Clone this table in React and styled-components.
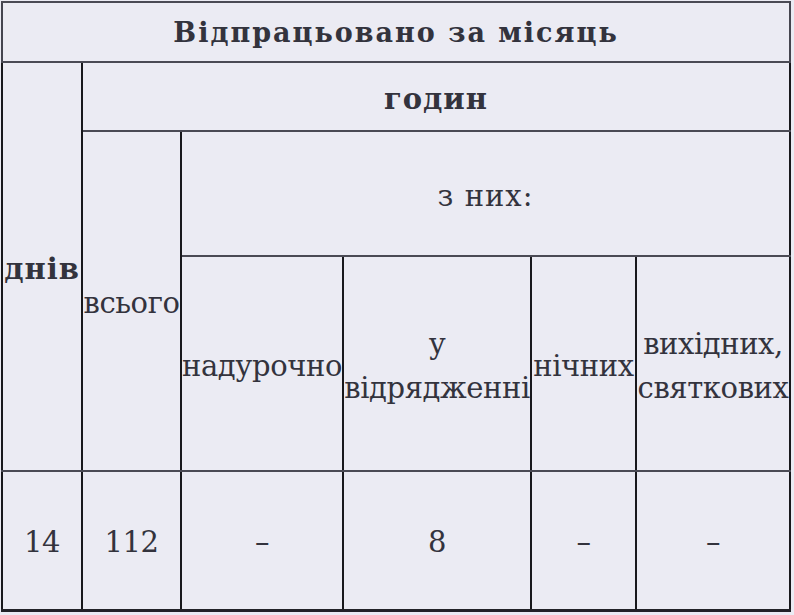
import React from 'react';
import styled, {createGlobalStyle} from 'styled-components';

const GlobalStyle = createGlobalStyle`
  html, body {
    margin: 0;
    padding: 0;
    background: #ebebf3;
  }
  body {
    font-family: "DejaVu Serif", "Liberation Serif", serif;
    color: #33333d;
  }
`;

const Page = styled.div`
  padding: 1px 0 0 1px;
  width: 794px;
  overflow: hidden;
`;

const Table = styled.table`
  border-collapse: collapse;
  table-layout: fixed;
  width: 790px;
  border-top: 2px solid #45454f;
  border-bottom: 3px solid #222228;
`;

const Row = styled.tr`
  height: ${props => props.h}px;
`;

const Cell = styled.td`
  padding: 4px 0 0;
  text-align: center;
  vertical-align: middle;
  font-size: 29px;
  line-height: 44px;
  font-weight: ${props => (props.bold ? 700 : 400)};
  letter-spacing: ${props => (props.spaced ? '1px' : '-0.4px')};
  border-left: 2px solid #18181c;
  border-right: 2px solid #18181c;
  border-top: 2px solid #4a4a54;
  border-bottom: 2px solid #4a4a54;
  white-space: nowrap;
  overflow: hidden;
`;

const Title = styled(Cell)`
  padding-top: 2px;
  font-size: 27px;
  font-weight: 700;
  letter-spacing: 2px;
  border-left-color: #45454f;
  border-right-color: #45454f;
`;

const widths = [80, 99, 162, 188, 105, 154];

export default function App() {
  return (
    <Page>
      <GlobalStyle />
      <Table>
        <colgroup>
          {widths.map((w, i) => (
            <col key={i} style={{width: w}} />
          ))}
        </colgroup>
        <tbody>
          <Row h={60}>
            <Title colSpan={6}>Відпрацьовано за місяць</Title>
          </Row>
          <Row h={69}>
            <Cell rowSpan={3} bold spaced>
              днів
            </Cell>
            <Cell colSpan={5} bold spaced>
              годин
            </Cell>
          </Row>
          <Row h={125}>
            <Cell rowSpan={2}>всього</Cell>
            <Cell colSpan={4} spaced>
              з них:
            </Cell>
          </Row>
          <Row h={215}>
            <Cell>надурочно</Cell>
            <Cell>
              у
              <br />
              відрядженні
            </Cell>
            <Cell>нічних</Cell>
            <Cell>
              вихідних,
              <br />
              святкових
            </Cell>
          </Row>
          <Row h={139}>
            <Cell>14</Cell>
            <Cell>112</Cell>
            <Cell>–</Cell>
            <Cell>8</Cell>
            <Cell>–</Cell>
            <Cell>–</Cell>
          </Row>
        </tbody>
      </Table>
    </Page>
  );
}
